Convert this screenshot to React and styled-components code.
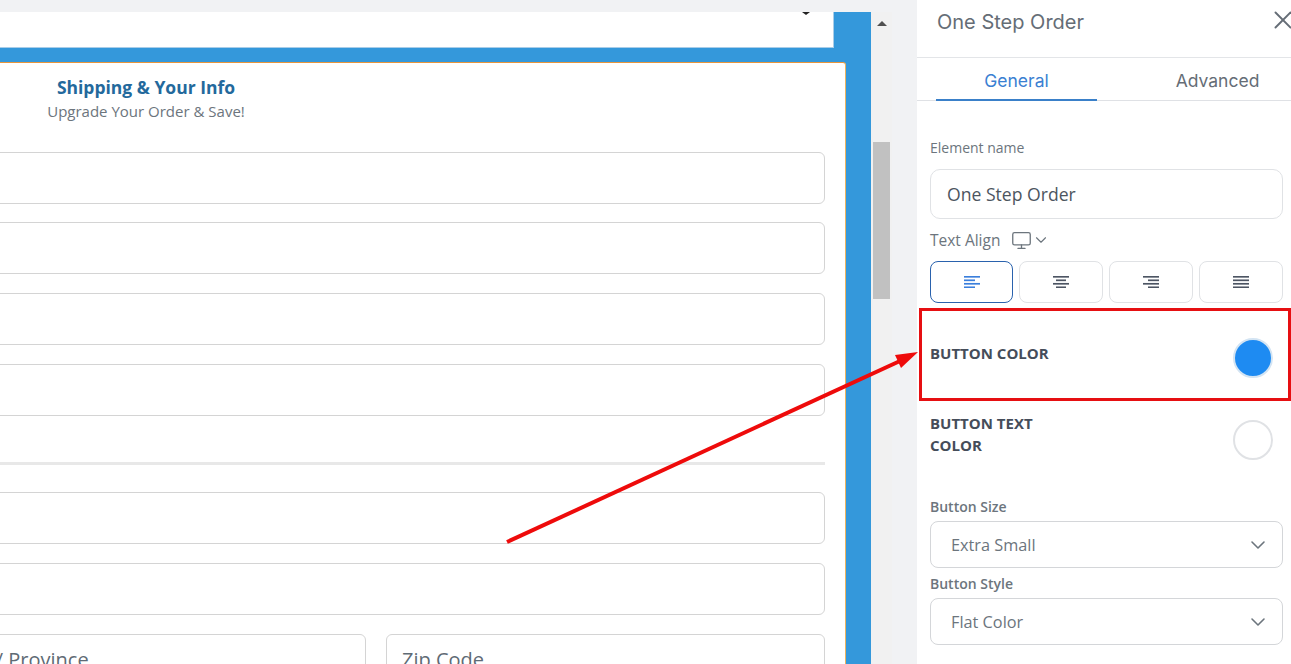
import React from 'react';
import styled, { createGlobalStyle } from 'styled-components';
import { ChevronDown, Monitor, X } from 'lucide-react';

const GlobalStyle = createGlobalStyle`
  html, body { margin: 0; padding: 0; background: #f1f2f4; }
  * { box-sizing: border-box; }
  body { font-family: "Open Sans", "Liberation Sans", sans-serif; }
`;

const Page = styled.div`
  position: relative;
  display: flex;
  width: 1291px;
  height: 664px;
  overflow: hidden;
  background: #f1f2f4;
`;
const Canvas = styled.div`
  flex: 0 0 871px;
  min-width: 0;
  height: 664px;
  margin-top: 12px;
  overflow: hidden;
  background: #3498db;
`;
const TopBox = styled.div`
  position: relative;
  width: 834px;
  height: 36px;
  background: #fff;
  border-bottom: 1px solid #a9cde8;
  border-right: 1px solid #a9cde8;
`;
const Caret = styled.span`
  position: absolute;
  top: 0;
  left: 802px;
  width: 0;
  height: 0;
  border-left: 4px solid transparent;
  border-right: 4px solid transparent;
  border-top: 3px solid #222;
`;
const Card = styled.div`
  width: 1400px;
  margin: 14px 0 0 -554px;
  padding: 11.5px 20px 0;
  background: #fff;
  border: 1px solid #e8953c;
  border-right-color: #edb35f;
  border-radius: 3px;
`;
const Heading = styled.h2`
  margin: 0;
  text-align: center;
  font-size: 17.5px;
  line-height: 25px;
  font-weight: 700;
  color: #23699c;
`;
const SubHeading = styled.p`
  margin: 0 0 30.1px;
  text-align: center;
  font-size: 15px;
  line-height: 22px;
  color: #6c757d;
`;
const Form = styled.div`
  display: flex;
  flex-direction: column;
  width: 898px;
  margin-left: auto;
  gap: 18.7px;
`;
const Field = styled.div`
  flex: ${(p) => (p.$half ? '1' : 'none')};
  height: 52px;
  padding: 10px 15px;
  font-size: 20px;
  line-height: 30px;
  color: #5f6b75;
  background: #fff;
  border: 1px solid #d4d4d4;
  border-radius: 6px;
`;
const Divider = styled.hr`
  flex: none;
  width: 100%;
  height: 3px;
  margin: 27.6px 0 8.6px;
  border: 0;
  background: #e8e8e8;
`;
const FieldRow = styled.div`
  display: flex;
  flex: none;
  gap: 20px;
`;
const Scrollbar = styled.div`
  flex: 0 0 21px;
  display: flex;
  flex-direction: column;
  align-items: center;
  margin-top: 12px;
  background: #f1f1f1;
`;
const ScrollUp = styled.span`
  width: 0;
  height: 0;
  margin-top: 9px;
  border-left: 5px solid transparent;
  border-right: 5px solid transparent;
  border-bottom: 5px solid #505050;
`;
const ScrollThumb = styled.div`
  width: 17px;
  height: 157px;
  margin-top: 116px;
  background: #c1c1c1;
`;
const Gutter = styled.div`
  flex: 0 0 25px;
  background: #f1f2f4;
`;
const Panel = styled.aside`
  flex: 0 0 374px;
  min-width: 0;
  height: 664px;
  overflow: hidden;
  background: #fff;
`;
const PanelHeader = styled.header`
  display: flex;
  justify-content: space-between;
  height: 58px;
  padding: 10px 0 0 20px;
  border-bottom: 1px solid #e3e5e8;
`;
const PanelTitle = styled.h1`
  margin: 0;
  font-family: Inter, "Liberation Sans", sans-serif;
  font-size: 20px;
  line-height: 24px;
  font-weight: 400;
  color: #656d76;
`;
const CloseIcon = styled(X)`
  flex: none;
  width: 30px;
  height: 30px;
  margin: -5px -7px 0 0;
  color: #656d76;
`;
const Tabs = styled.div`
  display: flex;
  gap: 40px;
  height: 43px;
  padding-left: 19px;
  border-bottom: 1px solid #dfe1e5;
`;
const Tab = styled.div`
  flex: 0 0 161px;
  height: 43px;
  padding-top: 11px;
  text-align: center;
  font-family: Inter, "Liberation Sans", sans-serif;
  font-size: 17.5px;
  line-height: 24px;
  color: ${(p) => (p.$active ? '#3a80d2' : '#656d76')};
  border-bottom: ${(p) => (p.$active ? '2px solid #3a80c9' : '0')};
`;
const PanelBody = styled.div`
  padding: 37px 8px 0 13px;
`;
const Label = styled.div`
  display: flex;
  align-items: center;
  gap: 11px;
  height: 20px;
  margin-top: ${(p) => p.$top || 0}px;
  font-size: ${(p) => p.$size || 14}px;
  line-height: 20px;
  font-weight: ${(p) => (p.$strong ? 600 : 400)};
  color: #6c757d;
`;
const TextInput = styled.div`
  height: 50px;
  margin: 11px 0 11px;
  padding: 0 16px;
  font-size: 17.6px;
  line-height: 48px;
  color: #4c5560;
  border: 1px solid #e0e2e5;
  border-radius: 10px;
`;
const DeviceIcon = styled.span`
  display: inline-flex;
  align-items: center;
  color: #6c757d;
`;
const AlignRow = styled.div`
  display: grid;
  grid-template-columns: 83px 84px 84px 84px;
  gap: 6px;
  margin-top: 11px;
`;
const AlignButton = styled.div`
  display: flex;
  align-items: center;
  justify-content: center;
  height: 42px;
  color: ${(p) => (p.$active ? '#3b7fdc' : '#4d5563')};
  border: 1px solid ${(p) => (p.$active ? '#2a62ad' : '#e0e2e5')};
  border-radius: 8px;
`;
const ColorRow = styled.div`
  display: flex;
  align-items: flex-start;
  justify-content: space-between;
  height: ${(p) => p.$height}px;
  margin: ${(p) => p.$margin};
  padding: ${(p) => p.$padding};
  border: ${(p) => (p.$marked ? '3px solid #e60f12' : '0')};
`;
const ColorLabel = styled.div`
  width: 135px;
  font-size: 15px;
  line-height: 22px;
  font-weight: 700;
  color: #454d5a;
`;
const Swatch = styled.div`
  width: 40px;
  height: 40px;
  margin-top: ${(p) => p.$top}px;
  border-radius: 50%;
  background: ${(p) => p.$color};
  border: 2px solid ${(p) => (p.$color === '#fff' ? '#e0e2e5' : '#d3e4f3')};
`;
const SelectBox = styled.div`
  display: flex;
  align-items: center;
  justify-content: space-between;
  height: 47px;
  margin: 4px 0 6px;
  padding: 0 12px 0 20px;
  font-size: 16.3px;
  color: #6c757d;
  border: 1px solid #d4d6d9;
  border-radius: 8px;
`;
const ArrowOverlay = styled.svg`
  position: absolute;
  top: 0;
  left: 0;
  pointer-events: none;
`;

const ALIGN_LINES = {
  left: [[0, 16], [0, 11], [0, 16], [0, 11]],
  center: [[0, 16], [3, 13], [0, 16], [3, 13]],
  right: [[0, 16], [5, 16], [0, 16], [5, 16]],
  justify: [[0, 16], [0, 16], [0, 16], [0, 16]],
};

const AlignIcon = ({ type }) => (
  <svg width="16" height="12" viewBox="0 0 16 12" fill="none" stroke="currentColor" strokeWidth="1.7">
    {ALIGN_LINES[type].map(([from, to], i) => (
      <line key={i} x1={from} x2={to} y1={0.8 + i * 3.5} y2={0.8 + i * 3.5} />
    ))}
  </svg>
);

const App = () => (
  <Page>
    <GlobalStyle />
    <Canvas>
      <TopBox>
        <Caret />
      </TopBox>
      <Card>
        <Heading>Shipping &amp; Your Info</Heading>
        <SubHeading>Upgrade Your Order &amp; Save!</SubHeading>
        <Form>
          <Field />
          <Field />
          <Field />
          <Field />
          <Divider />
          <Field />
          <Field />
          <FieldRow>
            <Field $half>State / Province</Field>
            <Field $half>Zip Code</Field>
          </FieldRow>
        </Form>
      </Card>
    </Canvas>
    <Scrollbar>
      <ScrollUp />
      <ScrollThumb />
    </Scrollbar>
    <Gutter />
    <Panel>
      <PanelHeader>
        <PanelTitle>One Step Order</PanelTitle>
        <CloseIcon strokeWidth={1.5} />
      </PanelHeader>
      <Tabs>
        <Tab $active>General</Tab>
        <Tab>Advanced</Tab>
      </Tabs>
      <PanelBody>
        <Label>Element name</Label>
        <TextInput>One Step Order</TextInput>
        <Label $size={15.5}>
          Text Align
          <DeviceIcon>
            <Monitor size={21} strokeWidth={1.5} />
            <ChevronDown size={18} strokeWidth={1.5} />
          </DeviceIcon>
        </Label>
        <AlignRow>
          <AlignButton $active><AlignIcon type="left" /></AlignButton>
          <AlignButton><AlignIcon type="center" /></AlignButton>
          <AlignButton><AlignIcon type="right" /></AlignButton>
          <AlignButton><AlignIcon type="justify" /></AlignButton>
        </AlignRow>
        <ColorRow $marked $height={93} $margin="5px -8px 0 -11px" $padding="31px 15px 0 8px">
          <ColorLabel>BUTTON COLOR</ColorLabel>
          <Swatch $color="#1e8bf2" $top={-4} />
        </ColorRow>
        <ColorRow $height={78} $margin="0" $padding="11px 10px 0 0">
          <ColorLabel>BUTTON TEXT COLOR</ColorLabel>
          <Swatch $color="#fff" $top={8} />
        </ColorRow>
        <Label $strong $top={18}>Button Size</Label>
        <SelectBox>
          Extra Small
          <ChevronDown size={24} strokeWidth={1.6} />
        </SelectBox>
        <Label $strong>Button Style</Label>
        <SelectBox>
          Flat Color
          <ChevronDown size={24} strokeWidth={1.6} />
        </SelectBox>
      </PanelBody>
    </Panel>
    <ArrowOverlay width="1291" height="664" viewBox="0 0 1291 664">
      <line x1="507" y1="542" x2="900" y2="361" stroke="#ee0b0b" strokeWidth="4" />
      <polygon points="918,352 895,355 901,368" fill="#ee0b0b" />
    </ArrowOverlay>
  </Page>
);

export default App;
